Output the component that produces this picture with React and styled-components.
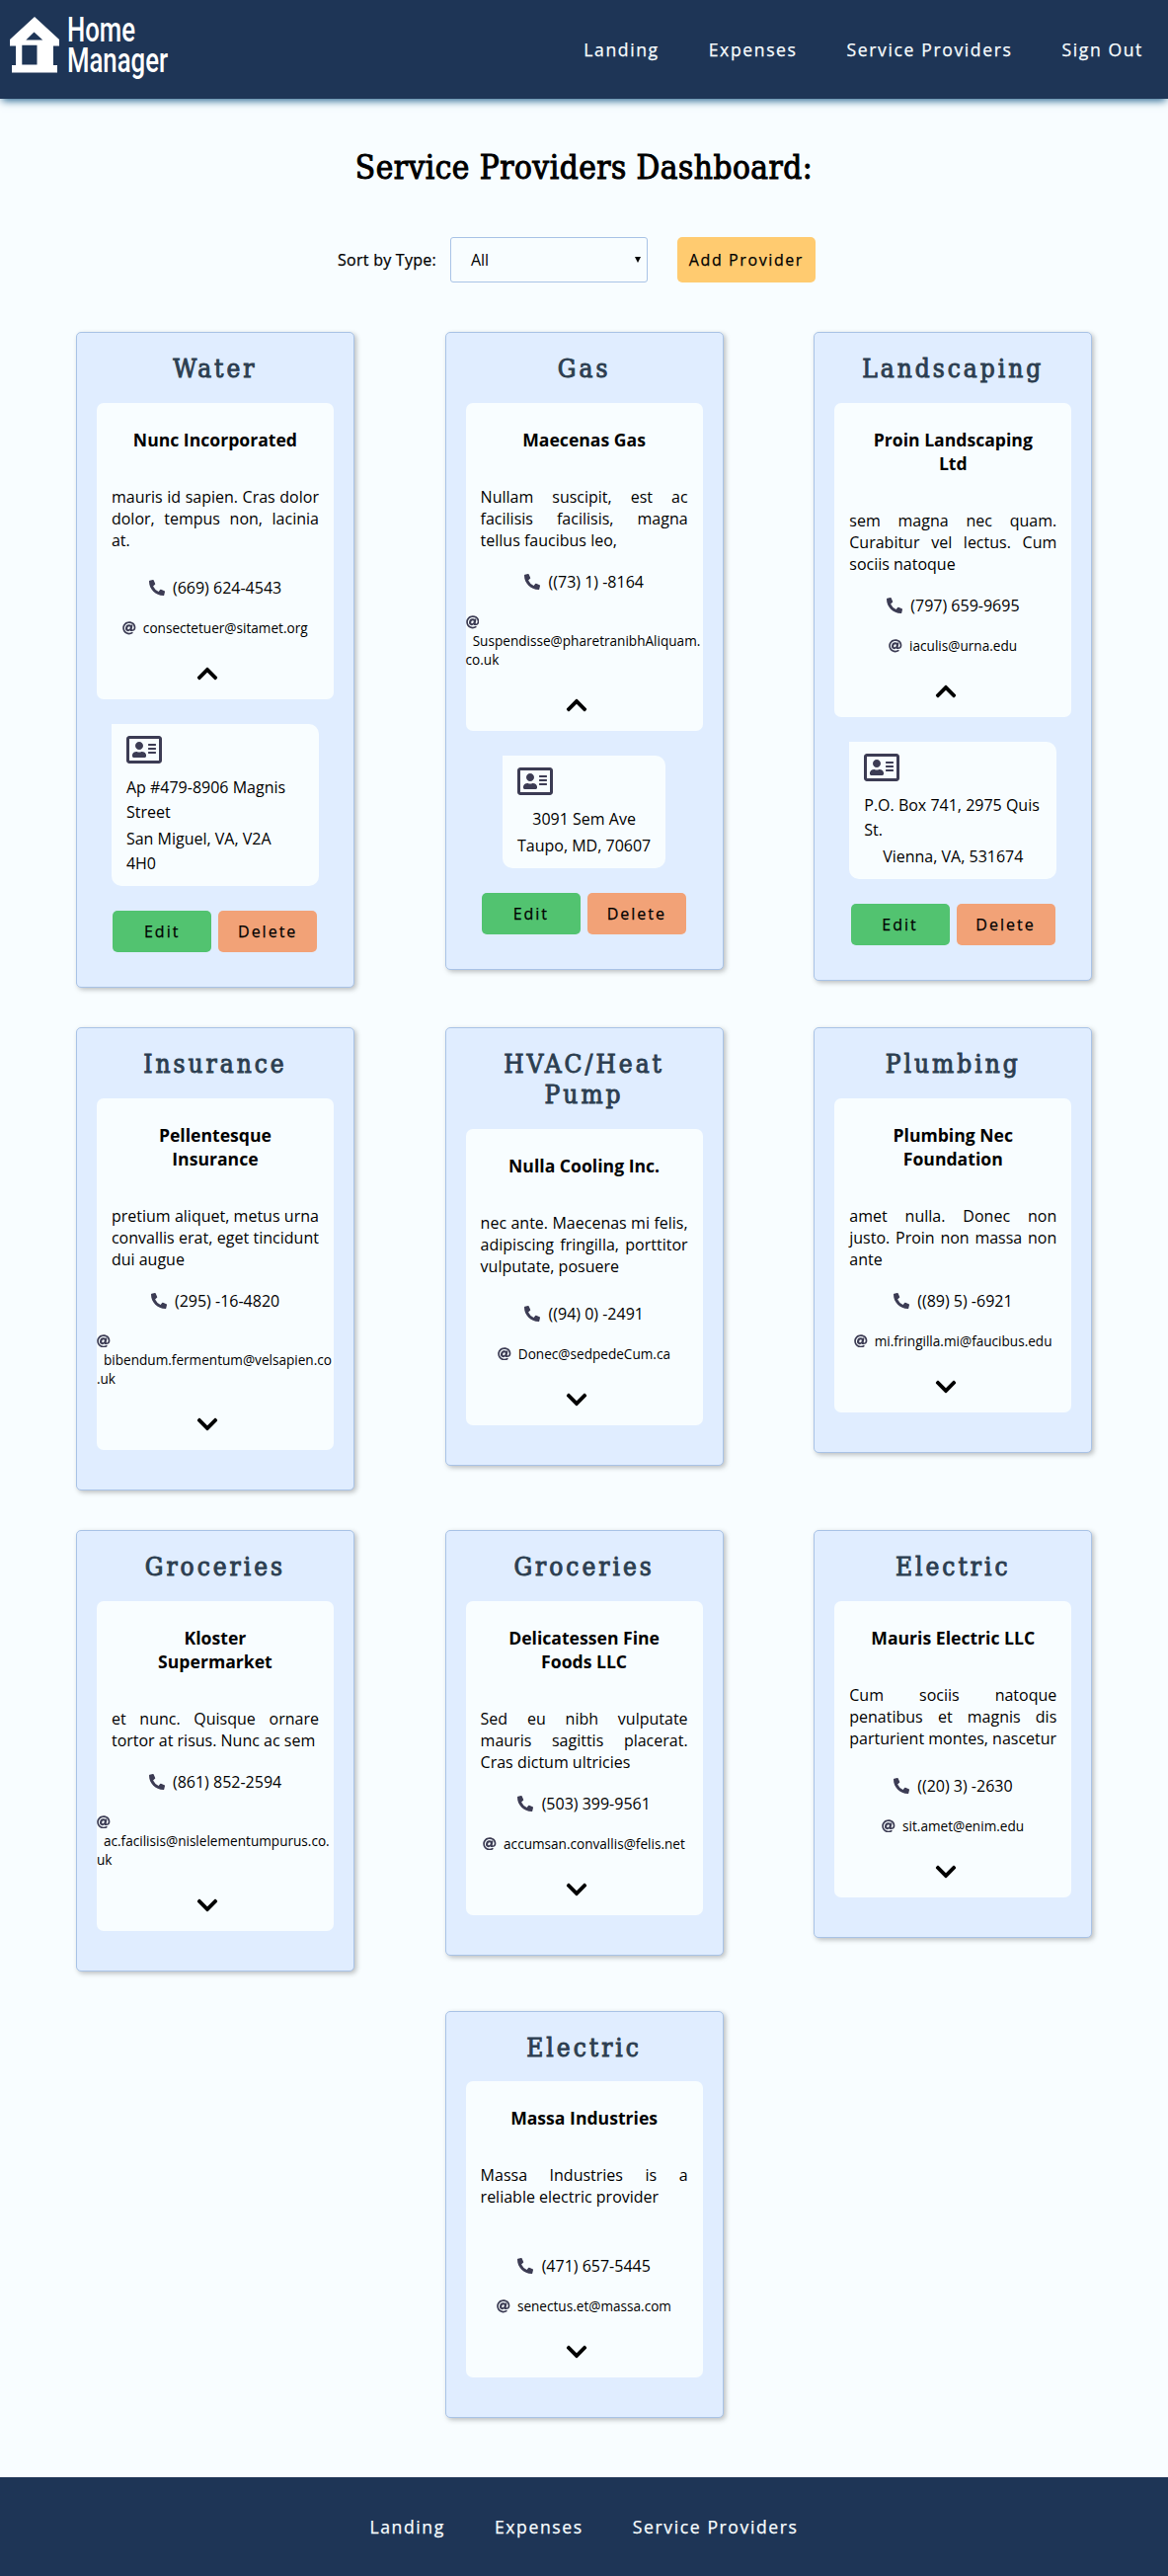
import React, { useState } from "react";
import styled, { createGlobalStyle } from "styled-components";
import {
  FaPhoneAlt,
  FaAt,
  FaChevronUp,
  FaChevronDown,
  FaRegAddressCard,
} from "react-icons/fa";

const GlobalStyle = createGlobalStyle`
  *, *::before, *::after { box-sizing: border-box; }
  body {
    margin: 0;
    background: #f8fdff;
    color: #000;
    font-family: "Open Sans", "Noto Sans", sans-serif;
    font-size: 16px;
  }
  h1, h2, h3, p { margin: 0; padding: 0; }
`;

const Header = styled.header`
  display: flex;
  justify-content: space-between;
  height: 100px;
  background: #1e3556;
  box-shadow: 0 4px 8px -2px #26648e;
`;

const Brand = styled.div`
  display: flex;
  align-items: flex-start;
  padding: 17px 0 0 10px;
`;

const LogoMark = styled.svg`
  display: block;
  width: 50px;
  height: 57px;
`;

const LogoText = styled.div`
  margin: -2.5px 0 0 8px;
  color: #fff;
  font-family: Roboto, sans-serif;
  font-weight: 500;
  font-size: 35px;
  line-height: 31px;
  transform: scaleX(0.735);
  transform-origin: 0 0;
`;

const Nav = styled.nav`
  display: flex;
  align-items: center;
  justify-content: center;
`;

const NavLink = styled.a`
  margin: 0 25px;
  color: #f8fdff;
  font-size: 17.6px;
  font-weight: 500;
  letter-spacing: 1.6px;
  line-height: 24px;
  -webkit-text-stroke: 0.25px #f8fdff;
`;

const PageTitle = styled.h1`
  margin-top: 50px;
  text-align: center;
  font-family: "DejaVu Serif Condensed", "DejaVu Serif", serif;
  font-stretch: condensed;
  font-size: 33px;
  font-weight: 400;
  line-height: 40px;
  letter-spacing: 0.5px;
  -webkit-text-stroke: 1px #000;
`;

const Toolbar = styled.div`
  display: flex;
  align-items: center;
  justify-content: center;
  height: 46px;
  margin-top: 50px;
  padding-right: 15px;
`;

const SortLabel = styled.span`
  margin-right: 14px;
  font-weight: 500;
  letter-spacing: 0.25px;
  -webkit-text-stroke: 0.25px #000;
`;

const SortSelect = styled.div`
  display: flex;
  align-items: center;
  justify-content: space-between;
  width: 200px;
  height: 46px;
  margin-right: 30px;
  padding: 0 6px 0 20px;
  border: 1px solid #a9c3e6;
  border-radius: 3px;
  font-size: 16px;
`;

const Button = styled.button`
  width: ${(p) => p.$width}px;
  height: ${(p) => p.$height}px;
  padding: 0;
  border: 0;
  border-radius: 5px;
  background: ${(p) => p.$color};
  color: #000;
  font-family: inherit;
  font-size: 16px;
  font-weight: 500;
  letter-spacing: ${(p) => p.$spacing || 2}px;
  -webkit-text-stroke: 0.25px #000;
`;

const Grid = styled.main`
  display: flex;
  flex-wrap: wrap;
  justify-content: space-around;
  align-items: flex-start;
  row-gap: 40px;
  margin: 50px 30.9px 60px 31.1px;
`;

const Card = styled.article`
  display: flex;
  flex-direction: column;
  align-items: center;
  width: 282px;
  padding: 21px 20px ${(p) => (p.$open ? 35 : 40)}px;
  border: 1px solid #a9c3e6;
  border-radius: 5px;
  background: #e0edff;
  box-shadow: 2px 2px 5px rgba(0, 0, 0, 0.25);
`;

const CardTitle = styled.h2`
  margin-bottom: 19px;
  text-align: center;
  color: #2c3e50;
  font-family: "DejaVu Serif Condensed", "DejaVu Serif", serif;
  font-stretch: condensed;
  font-size: 26px;
  font-weight: 400;
  letter-spacing: 3px;
  line-height: 30.85px;
  -webkit-text-stroke: 0.9px #2c3e50;
`;

const Panel = styled.section`
  display: flex;
  flex-direction: column;
  align-items: center;
  width: 240px;
  min-height: 300px;
  padding: 25px 0 14px;
  border-radius: 7px;
  background: #f8fdff;
`;

const Name = styled.h3`
  max-width: 180px;
  margin-bottom: 35px;
  text-align: center;
  font-size: 17.6px;
  font-weight: 700;
  line-height: 24px;
`;

const Description = styled.p`
  flex: 1 0 auto;
  width: 210px;
  text-align: justify;
  line-height: 22px;
`;

const Contact = styled.p`
  max-width: 240px;
  margin-top: 20px;
  overflow-wrap: break-word;
  font-size: ${(p) => (p.$small ? 13.6 : 16)}px;
  line-height: ${(p) => (p.$small ? 19 : 22)}px;

  svg {
    color: #3c3c54;
    vertical-align: -0.125em;
  }
`;

const Toggle = styled.button`
  display: flex;
  margin: 25px 15px 0 0;
  padding: 0;
  border: 0;
  background: none;
  color: #000;
  font-size: 24px;
`;

const AddressBox = styled.section`
  display: flex;
  flex-direction: column;
  align-items: flex-start;
  max-width: 210px;
  margin: 25px 0;
  padding: 10px 15px;
  border-radius: 0 10px 10px 10px;
  background: #f8fdff;
`;

const CardIcon = styled(FaRegAddressCard)`
  width: 36px;
  height: 32px;
  margin-bottom: 10px;
  color: #3c3c54;
`;

const AddressLine = styled.p`
  align-self: center;
  line-height: 25px;

  & + & {
    margin-top: 2px;
  }
`;

const Actions = styled.div`
  display: flex;
  gap: 7px;
  margin-right: 0.5px;
`;

const Footer = styled.footer`
  display: flex;
  justify-content: center;
  height: 100px;
  background: #1e3556;
`;

const PROVIDERS = [
  { type: "Water", name: "Nunc Incorporated", about: "mauris id sapien. Cras dolor dolor, tempus non, lacinia at.", phone: "(669) 624-4543", email: "consectetuer@sitamet.org", address: ["Ap #479-8906 Magnis Street", "San Miguel, VA, V2A 4H0"] },
  { type: "Gas", name: "Maecenas Gas", about: "Nullam suscipit, est ac facilisis facilisis, magna tellus faucibus leo,", phone: "((73) 1) -8164", email: "Suspendisse@pharetranibhAliquam.co.uk", address: ["3091 Sem Ave", "Taupo, MD, 70607"] },
  { type: "Landscaping", name: "Proin Landscaping Ltd", about: "sem magna nec quam. Curabitur vel lectus. Cum sociis natoque", phone: "(797) 659-9695", email: "iaculis@urna.edu", address: ["P.O. Box 741, 2975 Quis St.", "Vienna, VA, 531674"] },
  { type: "Insurance", name: "Pellentesque Insurance", about: "pretium aliquet, metus urna convallis erat, eget tincidunt dui augue", phone: "(295) -16-4820", email: "bibendum.fermentum@velsapien.co.uk" },
  { type: "HVAC/Heat Pump", name: "Nulla Cooling Inc.", about: "nec ante. Maecenas mi felis, adipiscing fringilla, porttitor vulputate, posuere", phone: "((94) 0) -2491", email: "Donec@sedpedeCum.ca" },
  { type: "Plumbing", name: "Plumbing Nec Foundation", about: "amet nulla. Donec non justo. Proin non massa non ante", phone: "((89) 5) -6921", email: "mi.fringilla.mi@faucibus.edu" },
  { type: "Groceries", name: "Kloster Supermarket", about: "et nunc. Quisque ornare tortor at risus. Nunc ac sem", phone: "(861) 852-2594", email: "ac.facilisis@nislelementumpurus.co.uk" },
  { type: "Groceries", name: "Delicatessen Fine Foods LLC", about: "Sed eu nibh vulputate mauris sagittis placerat. Cras dictum ultricies", phone: "(503) 399-9561", email: "accumsan.convallis@felis.net" },
  { type: "Electric", name: "Mauris Electric LLC", about: "Cum sociis natoque penatibus et magnis dis parturient montes, nascetur", phone: "((20) 3) -2630", email: "sit.amet@enim.edu" },
  { type: "Electric", name: "Massa Industries", about: "Massa Industries is a reliable electric provider", phone: "(471) 657-5445", email: "senectus.et@massa.com" },
];

function ProviderCard({ provider, defaultOpen }) {
  const [open, setOpen] = useState(defaultOpen);
  const expanded = open && provider.address;
  return (
    <Card $open={expanded}>
      <CardTitle>{provider.type}</CardTitle>
      <Panel>
        <Name>{provider.name}</Name>
        <Description>{provider.about}</Description>
        <Contact>
          <FaPhoneAlt />
          {"\u00a0\u00a0" + provider.phone}
        </Contact>
        <Contact $small>
          <FaAt />
          {"\u00a0\u00a0" + provider.email}
        </Contact>
        <Toggle onClick={() => setOpen(!open)} aria-label="Toggle details">
          {expanded ? <FaChevronUp /> : <FaChevronDown />}
        </Toggle>
      </Panel>
      {expanded && (
        <>
          <AddressBox>
            <CardIcon />
            {provider.address.map((line) => (
              <AddressLine key={line}>{line}</AddressLine>
            ))}
          </AddressBox>
          <Actions>
            <Button $width={100} $height={42} $color="#52c370">Edit</Button>
            <Button $width={100} $height={42} $color="#f2a277">Delete</Button>
          </Actions>
        </>
      )}
    </Card>
  );
}

export default function App() {
  return (
    <>
      <GlobalStyle />
      <Header>
        <Brand>
          <LogoMark viewBox="10 17 50 57" fill="#fff">
            <path
              fillRule="evenodd"
              d="M35 17 60 40V46.5H54V66H58V73.5H12V66H16V46.5H10V40ZM34.5 32.5 26.3 40.6H43.3ZM22.3 45.7V65.6H37.5V45.7Z"
            />
          </LogoMark>
          <LogoText>
            Home
            <br />
            Manager
          </LogoText>
        </Brand>
        <Nav>
          <NavLink>Landing</NavLink>
          <NavLink>Expenses</NavLink>
          <NavLink>Service Providers</NavLink>
          <NavLink>Sign Out</NavLink>
        </Nav>
      </Header>
      <PageTitle>Service Providers Dashboard:</PageTitle>
      <Toolbar>
        <SortLabel>Sort by Type:</SortLabel>
        <SortSelect>
          All
          <svg width="6" height="6" viewBox="0 0 6 6">
            <path d="M0 0H6L3 6Z" />
          </svg>
        </SortSelect>
        <Button $width={140} $height={46} $color="#ffcb70" $spacing={1.6}>Add Provider</Button>
      </Toolbar>
      <Grid>
        {PROVIDERS.map((p, i) => (
          <ProviderCard key={p.name} provider={p} defaultOpen={i < 3} />
        ))}
      </Grid>
      <Footer>
        <Nav>
          <NavLink>Landing</NavLink>
          <NavLink>Expenses</NavLink>
          <NavLink>Service Providers</NavLink>
        </Nav>
      </Footer>
    </>
  );
}
